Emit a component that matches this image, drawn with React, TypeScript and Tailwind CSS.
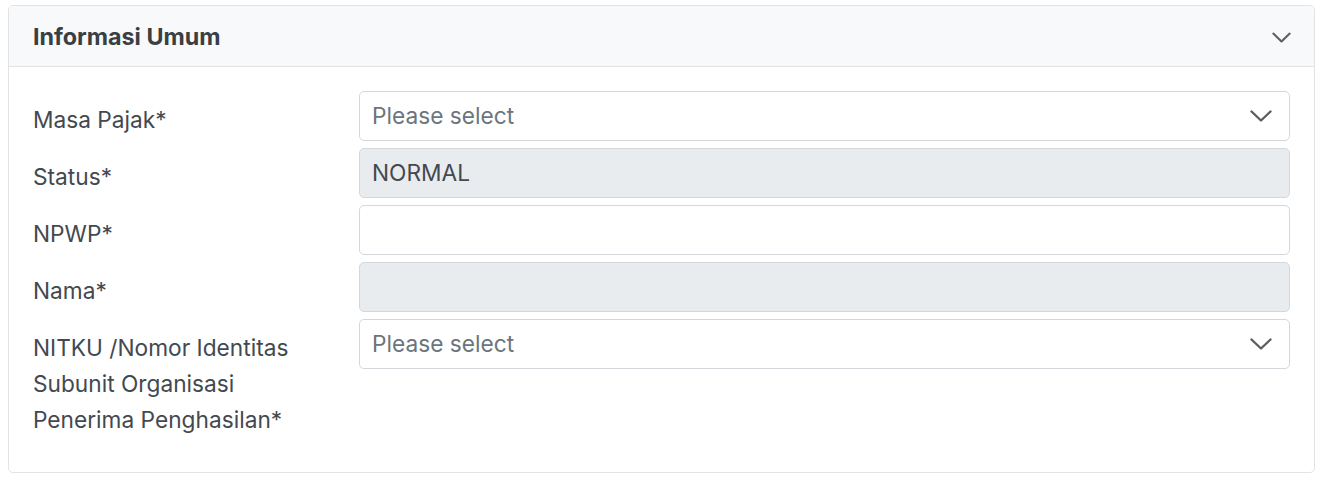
const Chevron = ({ className }: { className?: string }) => (
    <svg viewBox="0 0 22 12" className={className} fill="none" stroke="currentColor" strokeWidth="2.4" strokeLinecap="round" strokeLinejoin="round">
        <path d="M1.5 1.5 11 10.5 20.5 1.5" />
    </svg>
)

const Label = ({ children }: { children: React.ReactNode }) => (
    <div className="pt-[11px] leading-[36px] text-[#43494f]">{children}</div>
)

const Select = () => (
    <div className="h-[50px] flex items-center justify-between px-[12px] border border-[#d4d7db] rounded-[5px] bg-white text-[#6c757d]">
        <span>Please select</span>
        <Chevron className="w-[22px] h-[12px] mr-[5px] text-[#5a5f64]" />
    </div>
)

const Input = ({ value, disabled }: { value?: string; disabled?: boolean }) => (
    <div
        className={`h-[50px] flex items-center px-[12px] border border-[#d4d7db] rounded-[5px] text-[#43494f] ${
            disabled ? "bg-[#e9ecef]" : "bg-white"
        }`}
    >
        {value}
    </div>
)

export default function App() {
    return (
        <div className="bg-white pt-[5px] pl-[8px] pr-[15px] pb-[8px] font-['Inter',sans-serif] text-[22.7px]">
            <div className="border border-[#e1e3e5] rounded-[5px] overflow-hidden">
                {/* HEADER */}
                <div className="h-[61px] flex items-center justify-between pt-[2px] pl-[24px] pr-[23px] bg-[#f8f9fa] border-b border-[#e1e3e5]">
                    <h2 className="font-bold text-[23.3px] text-[#3a3f44]">Informasi Umum</h2>
                    <Chevron className="w-[19px] h-[11px] text-[#5a5f64]" />
                </div>

                {/* BODY */}
                <div className="pt-[24px] pb-[34px] px-[24px] grid grid-cols-[326px_1fr] gap-y-[7px]">
                    <Label>Masa Pajak*</Label>
                    <Select />

                    <Label>Status*</Label>
                    <Input value="NORMAL" disabled />

                    <Label>NPWP*</Label>
                    <Input />

                    <Label>Nama*</Label>
                    <Input disabled />

                    <Label>
                        NITKU /Nomor Identitas
                        <br />
                        Subunit Organisasi
                        <br />
                        Penerima Penghasilan*
                    </Label>
                    <Select />
                </div>
            </div>
        </div>
    )
}
